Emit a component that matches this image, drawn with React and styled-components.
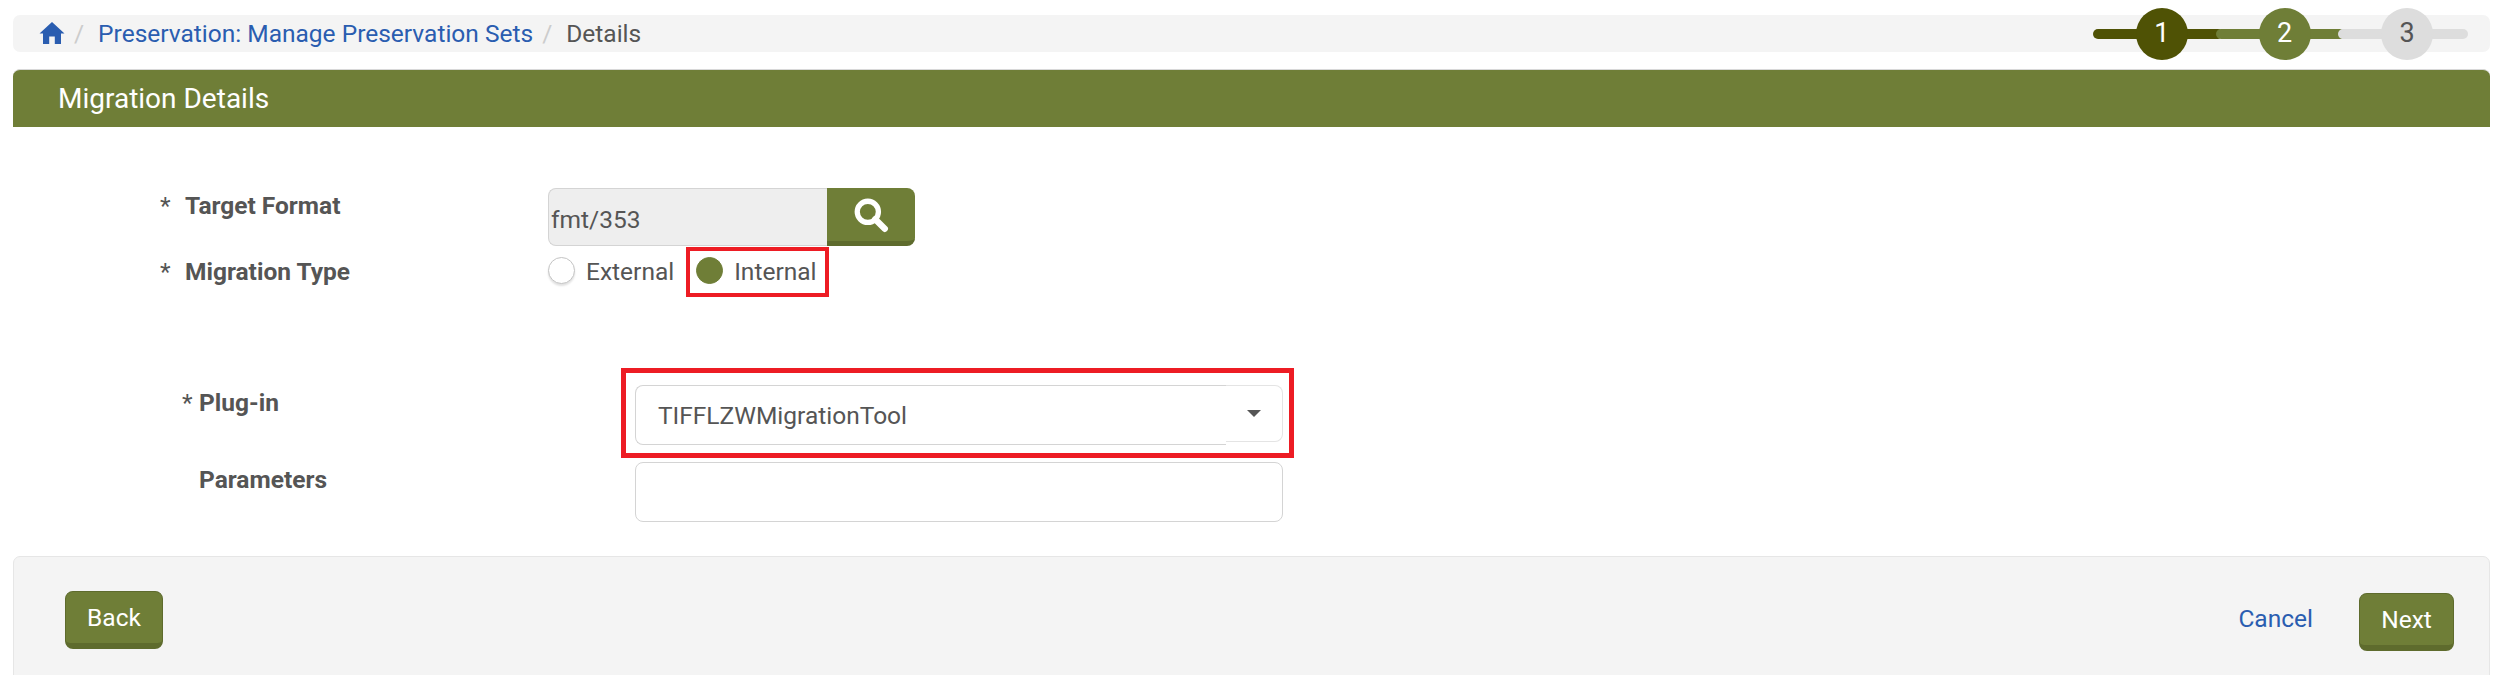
import React from 'react'
import styled, { createGlobalStyle } from 'styled-components'

const GREEN = '#6f7e37'
const TEXT = '#555555'
const LINK = '#2a5db0'
const RED = '#ed1c24'

const Global = createGlobalStyle`
  html, body { margin: 0; padding: 0; background: #fff; overflow: hidden; }
  body { font-family: Roboto, "Liberation Sans", sans-serif; color: ${TEXT}; }
  * { box-sizing: border-box; }
`

const Page = styled.div`
  width: 2500px;
  height: 675px;
  padding: 15px 10px 0 13px;
  overflow: hidden;
`

const BreadcrumbBar = styled.div`
  display: flex;
  align-items: center;
  justify-content: space-between;
  height: 37px;
  padding: 0 22px 0 26px;
  background: #f4f4f4;
  border-radius: 7px;
`

const Crumbs = styled.div`
  display: flex;
  align-items: center;
  padding-bottom: 1px;
  font-size: 24.5px;
`

const Home = styled.svg`
  width: 26px;
  height: 24px;
  fill: ${LINK};
`

const Slash = styled.span`
  color: #ccc;
  margin: 0 ${p => p.$right}px 0 ${p => p.$left}px;
`

const CrumbLink = styled.a`
  color: ${LINK};
`

const Stepper = styled.div`
  display: flex;
  width: 375px;
`

const Step = styled.div`
  position: relative;
  flex: 1;
  display: flex;
  justify-content: center;
  padding-left: 8px;
  margin-left: ${p => (p.$first ? 0 : -7)}px;
  z-index: ${p => p.$layer};

  &::before {
    content: '';
    position: absolute;
    left: 0;
    right: 0;
    top: 21px;
    height: 10px;
    border-radius: 5px;
    background: ${p => p.$color};
  }
`

const StepCircle = styled.div`
  position: relative;
  width: 52px;
  height: 52px;
  padding-bottom: 1px;
  border-radius: 50%;
  display: flex;
  align-items: center;
  justify-content: center;
  font-size: 27px;
  background: ${p => p.$color};
  color: ${p => p.$ink};
`

const PanelHead = styled.div`
  display: flex;
  align-items: center;
  height: 58px;
  margin-top: 17px;
  padding-left: 45px;
  background: ${GREEN};
  border-top: 1px solid #d8d8d8;
  border-radius: 7px 7px 0 0;
  color: #fff;
  font-size: 28px;
`

const Form = styled.div`
  padding-top: 61px;
`

const Row = styled.div`
  display: flex;
  height: ${p => p.$height}px;
  margin-top: ${p => p.$top || 0}px;
`

const Label = styled.div`
  display: flex;
  width: ${p => p.$width}px;
  padding-left: ${p => p.$indent}px;
  padding-top: ${p => p.$drop}px;
  font-size: 24.5px;
  font-weight: 700;
  line-height: 30px;
`

const Star = styled.span`
  width: ${p => p.$width}px;
  font-weight: 400;
`

const SearchBox = styled.div`
  display: flex;
  width: 367px;
  height: 58px;
`

const ReadOnlyInput = styled.div`
  width: 279px;
  display: flex;
  align-items: center;
  font-size: 24.5px;
  padding: 4px 0 0 2px;
  background: #eeeeee;
  border: 1px solid #d4d4d4;
  border-right: none;
  border-radius: 8px 0 0 8px;
`

const SearchButton = styled.button`
  width: 88px;
  padding: 0;
  display: flex;
  align-items: center;
  justify-content: center;
  background: ${GREEN};
  border: none;
  border-bottom: 5px solid #5e6b2d;
  border-radius: 0 8px 8px 0;
`

const RadioDot = styled.span`
  width: 27px;
  height: 27px;
  flex: none;
  border-radius: 50%;
  background: ${p => (p.$on ? GREEN : '#fff')};
  border: 1px solid ${p => (p.$on ? GREEN : '#c4c4c4')};
  box-shadow: ${p => (p.$on ? 'none' : '0 2px 2px #e2e2e2')};
`

const RadioText = styled.span`
  font-size: 24.5px;
  line-height: 27px;
  padding-top: 1px;
  margin-left: ${p => p.$left}px;
`

const External = styled.div`
  display: flex;
  padding-top: 10px;
`

const Highlight = styled.div`
  display: flex;
  flex: none;
  border: ${p => p.$weight}px solid ${RED};
`

const InternalBox = styled(Highlight)`
  width: 143px;
  height: 50px;
  margin-left: 12px;
  padding: 6px 0 0 6px;
`

const SelectBox = styled(Highlight)`
  width: 673px;
  height: 90px;
  margin-left: -14px;
  padding: 12px 6px 0 9px;
`

const Select = styled.div`
  display: flex;
  width: 648px;
  height: 60px;
  font-size: 24.5px;
`

const SelectValue = styled.div`
  width: 591px;
  display: flex;
  align-items: center;
  padding: 0 0 0 22px;
  border: 1px solid #d4d4d4;
  border-right: none;
  border-radius: 8px 0 0 8px;
`

const SelectArrow = styled.div`
  width: 57px;
  height: 57px;
  display: flex;
  align-items: center;
  justify-content: center;
  border: 1px solid #e4e4e4;
  border-left: none;
  border-radius: 0 8px 8px 0;

  &::after {
    content: '';
    border-left: 7px solid transparent;
    border-right: 7px solid transparent;
    border-top: 7px solid ${TEXT};
  }
`

const TextInput = styled.div`
  width: 648px;
  height: 60px;
  border: 1px solid #d4d4d4;
  border-radius: 8px;
`

const Footer = styled.div`
  display: flex;
  align-items: flex-start;
  justify-content: space-between;
  height: 140px;
  margin-top: 34px;
  padding: 34px 35px 0 51px;
  background: #f4f4f4;
  border: 1px solid #e6e6e6;
  border-radius: 7px 7px 0 0;
`

const Actions = styled.div`
  display: flex;
  align-items: flex-start;
  gap: 46px;
`

const Cancel = styled.a`
  color: ${LINK};
  font-size: 24.5px;
  line-height: 27px;
  margin-top: 14px;
`

const ActionButton = styled.button`
  width: ${p => p.$width}px;
  height: 58px;
  margin-top: ${p => p.$top || 0}px;
  padding: 0;
  background: ${GREEN};
  color: #fff;
  font-family: inherit;
  font-size: 24.5px;
  border: 1px solid #5e6b2d;
  border-bottom: 6px solid #5e6b2d;
  border-radius: 8px;
`

const steps = [
  { n: 1, bar: '#4f5205', dot: '#4f5205', ink: '#fff' },
  { n: 2, bar: GREEN, dot: GREEN, ink: '#fff' },
  { n: 3, bar: '#dddddd', dot: '#dddddd', ink: TEXT },
]

export default function App() {
  return (
    <Page>
      <Global />
      <BreadcrumbBar>
        <Crumbs>
          <Home viewBox="0 0 26 24">
            <path d="M13 1 L25.5 12.6 L22 12.6 L22 23 L15.8 23 L15.8 15.5 L10.2 15.5 L10.2 23 L4 23 L4 12.6 L0.5 12.6 Z" />
          </Home>
          <Slash $left={9} $right={14}>/</Slash>
          <CrumbLink>Preservation: Manage Preservation Sets</CrumbLink>
          <Slash $left={9} $right={14}>/</Slash>
          <span>Details</span>
        </Crumbs>
        <Stepper>
          {steps.map((s, i) => (
            <Step key={s.n} $first={i === 0} $color={s.bar} $layer={i + 1}>
              <StepCircle $color={s.dot} $ink={s.ink}>{s.n}</StepCircle>
            </Step>
          ))}
        </Stepper>
      </BreadcrumbBar>

      <PanelHead>Migration Details</PanelHead>

      <Form>
        <Row $height={58}>
          <Label $width={535} $indent={147} $drop={3}>
            <Star $width={25}>*</Star>Target Format
          </Label>
          <SearchBox>
            <ReadOnlyInput>fmt/353</ReadOnlyInput>
            <SearchButton>
              <svg width="36" height="36" viewBox="0 0 34 34" fill="none" stroke="#fff">
                <circle cx="14" cy="14" r="10" strokeWidth="5" />
                <path d="M21 21 L30 30" strokeWidth="6" strokeLinecap="round" />
              </svg>
            </SearchButton>
          </SearchBox>
        </Row>
        <Row $height={51} $top={1}>
          <Label $width={535} $indent={147} $drop={10}>
            <Star $width={25}>*</Star>Migration Type
          </Label>
          <External>
            <RadioDot />
            <RadioText $left={11}>External</RadioText>
          </External>
          <InternalBox $weight={4}>
            <RadioDot $on />
            <RadioText $left={11}>Internal</RadioText>
          </InternalBox>
        </Row>
        <Row $height={90} $top={70}>
          <Label $width={622} $indent={169} $drop={20}>
            <Star $width={17}>*</Star>Plug-in
          </Label>
          <SelectBox $weight={5}>
            <Select>
              <SelectValue>TIFFLZWMigrationTool</SelectValue>
              <SelectArrow />
            </Select>
          </SelectBox>
        </Row>
        <Row $height={60} $top={4}>
          <Label $width={622} $indent={186} $drop={3}>Parameters</Label>
          <TextInput />
        </Row>
      </Form>

      <Footer>
        <ActionButton $width={98}>Back</ActionButton>
        <Actions>
          <Cancel>Cancel</Cancel>
          <ActionButton $width={95} $top={2}>Next</ActionButton>
        </Actions>
      </Footer>
    </Page>
  )
}
